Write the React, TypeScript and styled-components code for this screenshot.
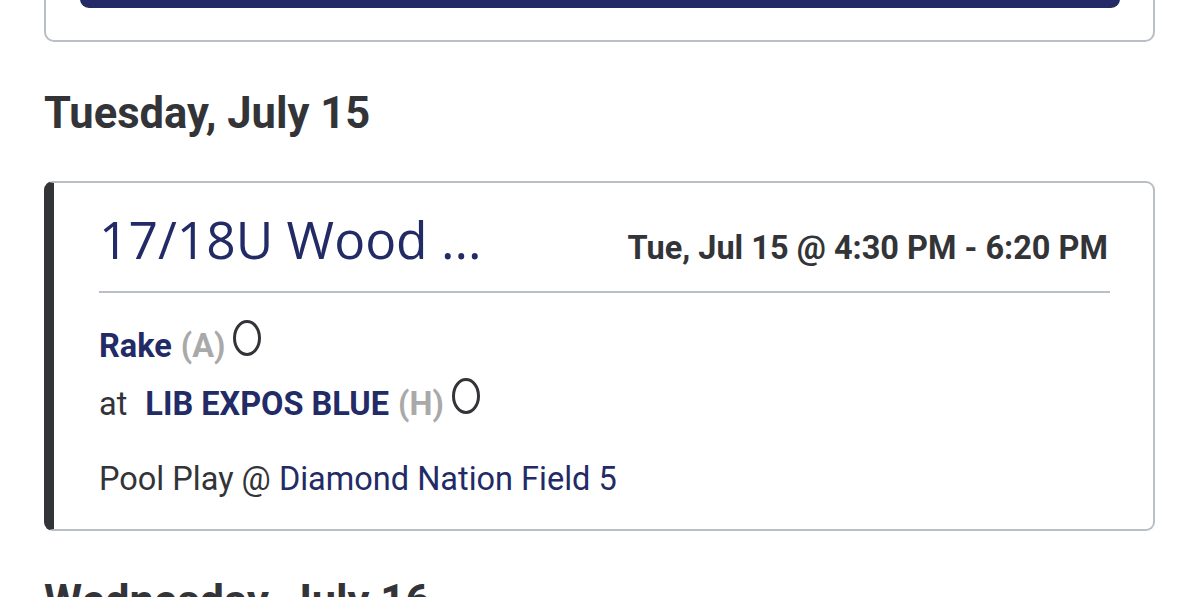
import React from "react";
import styled, { createGlobalStyle } from "styled-components";

const Global = createGlobalStyle`
  html, body { margin: 0; padding: 0; background: #ffffff; overflow: hidden; }
  body { font-family: Roboto, "Liberation Sans", sans-serif; }
  * { box-sizing: border-box; }
`;

const Page = styled.div`
  padding: 0 45px 0 44px;
  height: 597px;
  overflow: hidden;
`;

const TopCard = styled.div`
  margin-top: -80px;
  border: 2px solid #b9bfc5;
  border-radius: 10px;
  padding: 20px 33px 32px 34px;
  background: #fff;
`;

const PrimaryButton = styled.div`
  height: 66px;
  background: #222b66;
  border-radius: 9px;
`;

const DayHeading = styled.h2<{ $gap: number }>`
  margin: ${(p) => p.$gap}px 0 0 0;
  font-family: Roboto, sans-serif;
  font-weight: 700;
  font-size: 43.5px;
  line-height: 52px;
  color: #333438;
`;

const GameCard = styled.div`
  margin-top: 41px;
  border: 2px solid #b9bfc5;
  border-left: 10px solid #333438;
  border-radius: 9px;
  padding: 26px 43px 31px 45px;
  background: #fff;
`;

const TitleRow = styled.div`
  display: flex;
  justify-content: space-between;
  align-items: baseline;
  padding-bottom: 22px;
  border-bottom: 2px solid #b9bfc5;
`;

const EventTitle = styled.div`
  font-family: "Open Sans", sans-serif;
  font-size: 51.5px;
  line-height: 60px;
  color: #222b66;
  font-weight: 400;
`;

const DateTime = styled.div`
  font-family: Roboto, sans-serif;
  font-weight: 700;
  font-size: 32.5px;
  color: #333438;
  padding-right: 2px;
`;

const Matchup = styled.div`
  margin-top: 34px;
  display: flex;
  flex-direction: column;
  gap: 20px;
`;

const TeamLine = styled.div`
  display: flex;
  align-items: center;
  font-size: 32.5px;
  line-height: 38px;
  color: #333438;
`;

const AtWord = styled.span`
  margin-right: 18px;
`;

const TeamName = styled.span`
  font-weight: 700;
  color: #222b66;
`;

const Side = styled.span`
  font-weight: 700;
  color: #a9a9a9;
  margin-left: 9px;
`;

const Oval = styled.span`
  display: inline-block;
  align-self: flex-start;
  width: 28px;
  height: 36px;
  border: 3px solid #333438;
  border-radius: 14px / 18px;
  margin-left: 8px;
  margin-top: -7px;
`;

const Location = styled.div`
  margin-top: 37px;
  font-size: 32.5px;
  line-height: 38px;
  color: #333438;
`;

const Venue = styled.span`
  color: #222b66;
`;

export default function App() {
  return (
    <>
      <Global />
      <Page>
        <TopCard>
          <PrimaryButton />
        </TopCard>
        <DayHeading $gap={46}>Tuesday, July 15</DayHeading>
        <GameCard>
          <TitleRow>
            <EventTitle>17/18U Wood ...</EventTitle>
            <DateTime>Tue, Jul 15 @ 4:30 PM - 6:20 PM</DateTime>
          </TitleRow>
          <Matchup>
            <TeamLine>
              <TeamName>Rake</TeamName>
              <Side>(A)</Side>
              <Oval />
            </TeamLine>
            <TeamLine>
              <AtWord>at</AtWord>
              <TeamName>LIB EXPOS BLUE</TeamName>
              <Side>(H)</Side>
              <Oval />
            </TeamLine>
          </Matchup>
          <Location>
            Pool Play @ <Venue>Diamond Nation Field 5</Venue>
          </Location>
        </GameCard>
        <DayHeading $gap={45}>Wednesday, July 16</DayHeading>
      </Page>
    </>
  );
}
